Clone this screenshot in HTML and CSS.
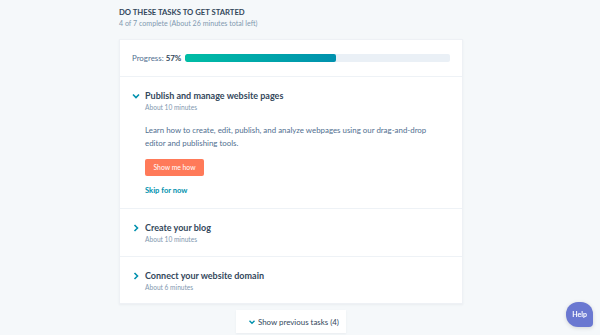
FILE: index.html
```html
<!DOCTYPE html>
<html lang="en">
<head>
    <meta charset="UTF-8">
    <title>Get started</title>
    <link rel="stylesheet" href="styles.css">
</head>
<body>
    <div class="wrap">
        <!-- Heading -->
        <div class="intro">
            <h1>DO THESE TASKS TO GET STARTED</h1>
            <p>4 of 7 complete (About 26 minutes total left)</p>
        </div>

        <!-- Task card -->
        <div class="card">
            <div class="progress">
                <span class="progress-label">Progress: <b>57%</b></span>
                <div class="bar"><div class="fill" style="width: 57%;"></div></div>
            </div>

            <div class="task open">
                <div class="task-head">
                    <svg class="chev" width="8" height="8" viewBox="0 0 8 8"><path d="M1 2.5 L4 5.5 L7 2.5" fill="none" stroke="#0091ae" stroke-width="1.6"/></svg>
                    <div>
                        <div class="task-title">Publish and manage website pages</div>
                        <div class="task-time">About 10 minutes</div>
                    </div>
                </div>
                <div class="task-body">
                    <p>Learn how to create, edit, publish, and analyze webpages using our drag-and-drop editor and publishing tools.</p>
                    <a class="btn" href="#">Show me how</a>
                    <a class="skip" href="#">Skip for now</a>
                </div>
            </div>

            <div class="task">
                <div class="task-head">
                    <svg class="chev" width="8" height="8" viewBox="0 0 8 8"><path d="M2.5 1 L5.5 4 L2.5 7" fill="none" stroke="#0091ae" stroke-width="1.6"/></svg>
                    <div>
                        <div class="task-title">Create your blog</div>
                        <div class="task-time">About 10 minutes</div>
                    </div>
                </div>
            </div>

            <div class="task">
                <div class="task-head">
                    <svg class="chev" width="8" height="8" viewBox="0 0 8 8"><path d="M2.5 1 L5.5 4 L2.5 7" fill="none" stroke="#0091ae" stroke-width="1.6"/></svg>
                    <div>
                        <div class="task-title">Connect your website domain</div>
                        <div class="task-time">About 6 minutes</div>
                    </div>
                </div>
            </div>
        </div>

        <div class="more">
            <a class="more-btn" href="#">
                <svg width="8" height="8" viewBox="0 0 8 8"><path d="M1.5 2.8 L4 5.3 L6.5 2.8" fill="none" stroke="#0091ae" stroke-width="1.4"/></svg>
                Show previous tasks (4)
            </a>
        </div>
    </div>

    <a class="help" href="#">Help</a>
</body>
</html>
```

FILE: styles.css
```css
/* Base */
body {
    margin: 0;
    padding: 0;
    background-color: #f5f8fa;
    color: #33475b;
    font-family: Lato, "Open Sans", sans-serif;
    height: 335px;
    overflow: hidden;
}

.wrap {
    width: 344px;
    margin-left: 119px;
    padding-top: 8px;
}

/* Heading */
.intro h1 {
    margin: 0;
    font-size: 7.7px;
    font-weight: 700;
    line-height: 9px;
    color: #33475b;
}

.intro p {
    margin: 3px 0 0;
    font-size: 7.1px;
    line-height: 8px;
    color: #8298b0;
}

/* Card */
.card {
    margin-top: 11px;
    background-color: #fff;
    border: 1px solid #eef1f5;
    box-shadow: 0 1px 2px rgba(45, 62, 80, 0.06);
}

.progress {
    display: flex;
    align-items: center;
    height: 36px;
    padding: 0 12px 0 12px;
    border-bottom: 1px solid #eef2f6;
}

.progress-label {
    font-size: 7.9px;
    color: #516f90;
    white-space: nowrap;
    margin-right: 4px;
}

.progress-label b {
    color: #33475b;
}

.bar {
    flex: 1;
    height: 8px;
    border-radius: 2px;
    background-color: #eaf0f6;
    overflow: hidden;
}

.fill {
    height: 100%;
    border-radius: 2px;
    background: linear-gradient(to right, #00bda5, #0091ae);
}

/* Tasks */
.task {
    border-bottom: 1px solid #eef2f6;
    padding: 13px 0 12px 12px;
}

.task:last-child {
    border-bottom: none;
    padding-bottom: 11px;
}

.task.open {
    padding-bottom: 13px;
}

.task-head {
    display: flex;
    align-items: flex-start;
}

.chev {
    margin-top: 2px;
    margin-right: 5px;
}

.task-title {
    font-size: 9px;
    font-weight: 700;
    line-height: 12px;
    color: #33475b;
}

.task-time {
    font-size: 6.6px;
    line-height: 10px;
    color: #8298b0;
}

.task-body {
    padding-left: 13px;
    padding-top: 12px;
}

.task-body p {
    margin: 0;
    width: 300px;
    font-size: 7.9px;
    line-height: 13px;
    color: #516f90;
}

.btn {
    display: inline-block;
    margin-top: 9px;
    width: 59px;
    height: 17px;
    line-height: 17px;
    text-align: center;
    border-radius: 2px;
    background-color: #ff7a59;
    color: #fff;
    font-size: 6.8px;
    text-decoration: none;
}

.skip {
    display: block;
    margin-top: 9px;
    font-size: 7.6px;
    font-weight: 700;
    line-height: 10px;
    color: #0091ae;
    text-decoration: none;
}

/* Show previous */
.more {
    display: flex;
    justify-content: center;
    margin-top: 6px;
}

.more-btn {
    display: flex;
    align-items: center;
    gap: 2px;
    width: 110px;
    box-sizing: border-box;
    height: 23px;
    padding: 0 0 0 12px;
    background-color: #fff;
    box-shadow: 0 1px 2px rgba(45, 62, 80, 0.06);
    font-size: 7.9px;
    color: #33475b;
    text-decoration: none;
}

/* Help bubble */
.help {
    position: fixed;
    left: 566px;
    top: 302px;
    width: 27px;
    height: 25px;
    line-height: 25px;
    text-align: center;
    background-color: #6a78d1;
    color: #fff;
    font-size: 7px;
    font-weight: 700;
    border-radius: 12px 12px 4px 12px;
    text-decoration: none;
    box-shadow: 0 1px 4px rgba(0, 0, 0, 0.15);
}
```
